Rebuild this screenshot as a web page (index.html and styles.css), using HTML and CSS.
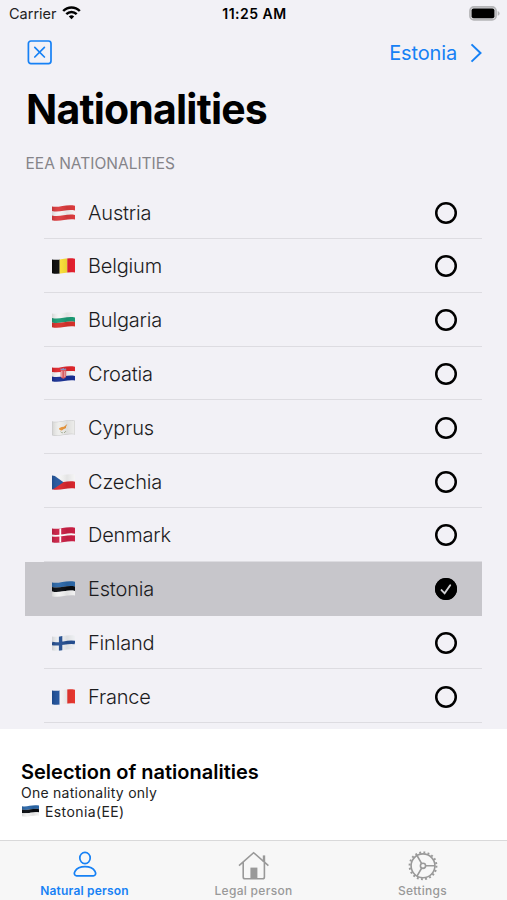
FILE: index.html
```html
<!DOCTYPE html>
<html lang="en">
<head>
	<meta charset="UTF-8">
	<title>Nationalities</title>
	<link rel="stylesheet" href="styles.css">
</head>
<body>
	<svg class="defs" width="0" height="0">
		<defs>
			<clipPath id="wave">
				<path d="M0 1.5C7 3 14 -1.2 23 .7V14.5C15 13 8 17.3 0 15.2Z"/>
			</clipPath>
			<linearGradient id="shade">
				<stop offset="0" stop-color="#000" stop-opacity=".12"/>
				<stop offset=".3" stop-color="#fff" stop-opacity=".04"/>
				<stop offset=".65" stop-color="#000" stop-opacity=".07"/>
				<stop offset="1" stop-color="#000" stop-opacity="0"/>
			</linearGradient>
			<g id="estonia">
				<path fill="#2b67a8" d="M0 0h23v5.5C15 3.5 8 8 0 6Z"/>
				<path fill="#080b10" d="M0 6C8 8 15 3.5 23 5.5V10C15 8.2 8 12.5 0 10.6Z"/>
				<path fill="#f2f2f2" d="M0 10.6C8 12.5 15 8.2 23 10v6H0Z"/>
			</g>
		</defs>
	</svg>

	<header class="status">
		<div class="carrier">
			<span>Carrier</span>
			<svg width="19" height="14" viewBox="0 0 19 14" fill="none" stroke="#000" stroke-width="2.5">
				<path d="M1.2 5C5.9 .2 13.1 .2 17.8 5"/>
				<path d="M4.3 8.2C7.3 5.3 11.7 5.3 14.7 8.2"/>
				<path d="M6.8 10.4Q9.5 8.3 12.2 10.4L9.5 13.2Z" fill="#000" stroke="none"/>
			</svg>
		</div>
		<div class="clock">11:25 AM</div>
		<svg class="battery" width="31" height="15" viewBox="0 0 31 15">
			<rect x=".9" y=".9" width="26.2" height="13" rx="4" fill="#d5d4d8" stroke="#b5b5b8" stroke-width="1.6"/>
			<rect x="2.6" y="2.6" width="22.8" height="9.6" rx="2"/>
			<path d="M28.7 5Q30.6 5.7 30.6 7.4T28.7 9.8Z" fill="#b5b5b8"/>
		</svg>
	</header>

	<nav class="navbar">
		<svg width="25" height="25" viewBox="0 0 25 25" fill="none" stroke="#1681f5" stroke-width="1.7" stroke-linecap="round">
			<rect x="1.4" y="1" width="22.6" height="22.6" rx="2.5"/>
			<path d="M7.8 7.4L17.4 17M17.4 7.4L7.8 17"/>
		</svg>
		<div class="next">
			<span>Estonia</span>
			<svg width="12" height="20" viewBox="0 0 12 20" fill="none" stroke="#1681f5" stroke-width="2">
				<path d="M1.5 1.4L10.5 10L1.5 18.6"/>
			</svg>
		</div>
	</nav>

	<main>
		<h1>Nationalities</h1>
		<h2>EEA NATIONALITIES</h2>
		<ul class="list">
			<li>
				<svg class="flag" viewBox="0 0 23 16"><g clip-path="url(#wave)">
					<path fill="#dc3b3d" d="M0 0h23v16H0z"/>
					<path fill="#f6f4f4" d="M0 6C8 8 15 3.5 23 5.5V10C15 8.2 8 12.5 0 10.6Z"/>
					<path fill="url(#shade)" d="M0 0h23v16H0z"/>
				</g></svg>
				<span class="name">Austria</span><i class="radio"></i>
			</li>
			<li>
				<svg class="flag" viewBox="0 0 23 16"><g clip-path="url(#wave)">
					<path fill="#080808" d="M0 0h7.7v16H0z"/>
					<path fill="#fbdf35" d="M7.7 0h7.6v16H7.7z"/>
					<path fill="#e5212f" d="M15.3 0H23v16h-7.7z"/>
					<path fill="url(#shade)" d="M0 0h23v16H0z"/>
				</g></svg>
				<span class="name">Belgium</span><i class="radio"></i>
			</li>
			<li>
				<svg class="flag" viewBox="0 0 23 16"><g clip-path="url(#wave)">
					<path fill="#f4f4f4" d="M0 0h23v5.5C15 3.5 8 8 0 6Z"/>
					<path fill="#1b9b74" d="M0 6C8 8 15 3.5 23 5.5V10C15 8.2 8 12.5 0 10.6Z"/>
					<path fill="#d8322b" d="M0 10.6C8 12.5 15 8.2 23 10v6H0Z"/>
					<path fill="url(#shade)" d="M0 0h23v16H0z"/>
				</g></svg>
				<span class="name">Bulgaria</span><i class="radio"></i>
			</li>
			<li>
				<svg class="flag" viewBox="0 0 23 16"><g clip-path="url(#wave)">
					<path fill="#e0262c" d="M0 0h23v5.5C15 3.5 8 8 0 6Z"/>
					<path fill="#f6f6f6" d="M0 6C8 8 15 3.5 23 5.5V10C15 8.2 8 12.5 0 10.6Z"/>
					<path fill="#172f94" d="M0 10.6C8 12.5 15 8.2 23 10v6H0Z"/>
					<path fill="#dd5a60" d="M8.6 4h5.6v5.5q0 2.8-2.8 3.2-2.8-.4-2.8-3.2z"/>
					<path stroke="#f3c3c6" stroke-width=".9" d="M9.8 5v6M12.8 5v6"/>
					<path fill="#8a8fc0" d="M8.4 4l.3-1.8 1.2.8 1.4-1.2 1.4 1.2 1.3-.8.3 1.8z"/>
					<path fill="url(#shade)" d="M0 0h23v16H0z"/>
				</g></svg>
				<span class="name">Croatia</span><i class="radio"></i>
			</li>
			<li>
				<svg class="flag" viewBox="0 0 23 16"><g clip-path="url(#wave)">
					<path fill="#eeeeec" d="M0 0h23v16H0z"/>
					<path fill="#e9953a" d="M7 8.3l2.6-1.4 2.3-.2 3.4-2.6-1.4 3 .2 1-2.6 1.2-1.6 1.2-2.3-.4z"/>
					<path fill="none" stroke="#9aa488" stroke-width=".9" d="M8.6 11.7q1 1.2 2.2 1.1M13.8 11.2q-.7 1.3-1.7 1.5"/>
					<path fill="url(#shade)" d="M0 0h23v16H0z"/>
					<path fill="none" stroke="#c8c8c9" d="M0 1.5C7 3 14 -1.2 23 .7V14.5C15 13 8 17.3 0 15.2Z"/>
				</g></svg>
				<span class="name">Cyprus</span><i class="radio"></i>
			</li>
			<li>
				<svg class="flag" viewBox="0 0 23 16"><g clip-path="url(#wave)">
					<path fill="#f5f5f5" d="M0 0h23v16H0z"/>
					<path fill="#d9272e" d="M0 8.6C8 10.5 15 6 23 7.8V16H0Z"/>
					<path fill="#23569e" d="M0 0L11.5 8.3L0 16z"/>
					<path fill="url(#shade)" d="M0 0h23v16H0z"/>
				</g></svg>
				<span class="name">Czechia</span><i class="radio"></i>
			</li>
			<li>
				<svg class="flag" viewBox="0 0 23 16"><g clip-path="url(#wave)">
					<path fill="#cb2045" d="M0 0h23v16H0z"/>
					<path fill="none" stroke="#fff" stroke-width="1.8" d="M8.3 0v16M0 8.5C8 10.3 15 5.8 23 7.6"/>
					<path fill="url(#shade)" d="M0 0h23v16H0z"/>
				</g></svg>
				<span class="name">Denmark</span><i class="radio"></i>
			</li>
			<li class="selected">
				<svg class="flag" viewBox="0 0 23 16"><g clip-path="url(#wave)">
					<use href="#estonia"/>
					<path fill="url(#shade)" d="M0 0h23v16H0z"/>
				</g></svg>
				<span class="name">Estonia</span>
				<i class="radio"><svg width="22" height="22" viewBox="0 0 22 22" fill="none" stroke="#d2d2d5" stroke-width="1.9" stroke-linecap="round">
					<path d="M6.5 12.1L9.6 15.3L15.2 7.2"/>
				</svg></i>
			</li>
			<li>
				<svg class="flag" viewBox="0 0 23 16"><g clip-path="url(#wave)">
					<path fill="#eef0f3" d="M0 0h23v16H0z"/>
					<path fill="none" stroke="#254f91" stroke-width="3.4" d="M8.6 0v16M0 8.5C8 10.3 15 5.8 23 7.6"/>
					<path fill="url(#shade)" d="M0 0h23v16H0z"/>
				</g></svg>
				<span class="name">Finland</span><i class="radio"></i>
			</li>
			<li>
				<svg class="flag" viewBox="0 0 23 16"><g clip-path="url(#wave)">
					<path fill="#1e509b" d="M0 0h7.7v16H0z"/>
					<path fill="#f5f5f5" d="M7.7 0h7.6v16H7.7z"/>
					<path fill="#e8372f" d="M15.3 0H23v16h-7.7z"/>
					<path fill="url(#shade)" d="M0 0h23v16H0z"/>
				</g></svg>
				<span class="name">France</span><i class="radio"></i>
			</li>
		</ul>
	</main>

	<section class="summary">
		<h3>Selection of nationalities</h3>
		<p>One nationality only</p>
		<div class="choice">
			<svg class="flag-small" viewBox="0 0 23 16"><g clip-path="url(#wave)">
				<use href="#estonia"/>
				<path fill="url(#shade)" d="M0 0h23v16H0z"/>
			</g></svg>
			<span>Estonia(EE)</span>
		</div>
	</section>

	<footer class="tabs">
		<div class="tab active">
			<svg width="32" height="32" viewBox="0 0 32 32" fill="none" stroke="currentColor" stroke-width="1.7">
				<ellipse cx="16" cy="9" rx="5.2" ry="5.6"/>
				<path d="M7.6 26.8C3 26.8 5.3 17.6 16 17.6S29 26.8 24.4 26.8Z"/>
			</svg>
			<span>Natural person</span>
		</div>
		<div class="tab">
			<svg width="32" height="32" viewBox="0 0 32 32" fill="none" stroke="currentColor" stroke-width="1.6">
				<path d="M1 16.6L15.6 3.7L30.4 16.6M5.2 13.2V28Q5.2 29.8 7 29.8H24.6Q26.4 29.8 26.4 28V13"/>
				<path stroke-width="2.4" d="M26 6.4V13"/>
				<path fill="currentColor" stroke="none" d="M12.4 18.6h7V30h-7z"/>
			</svg>
			<span>Legal person</span>
		</div>
		<div class="tab">
			<svg width="32" height="32" viewBox="0 0 32 32" fill="none" stroke="currentColor" stroke-width="1.6">
				<circle cx="16" cy="16.8" r="11.9"/>
				<circle cx="16" cy="16.8" r="13.4" stroke-width="2" stroke-dasharray="1.9 2.31"/>
				<circle cx="16" cy="16.8" r="2.6"/>
				<path d="M18.6 16.8H27.9M14.7 14.6L10 6.5M14.7 19L10 27.1"/>
			</svg>
			<span>Settings</span>
		</div>
	</footer>
</body>
</html>
```

FILE: styles.css
```css
*{
	margin: 0;
	padding: 0;
	box-sizing: border-box;
}
body{
	width: 507px;
	height: 900px;
	overflow: hidden;
	display: flex;
	flex-direction: column;
	font-family: Inter, "Liberation Sans", sans-serif;
	background-color: #f2f1f6;
	color: #000;
}
span, h1, h2, h3, p{
	white-space: nowrap;
}
.defs{
	position: absolute;
}
.status{
	height: 28px;
	display: grid;
	grid-template-columns: 1fr auto 1fr;
	align-items: center;
	padding: 0 7px 2px 9px;
	font-size: 14.5px;
}
.carrier{
	display: flex;
	align-items: center;
	gap: 5px;
	color: #222;
}
.clock{
	font-size: 14px;
	font-weight: 600;
	letter-spacing: .5px;
}
.battery{
	justify-self: end;
}
.navbar{
	height: 49px;
	display: flex;
	align-items: center;
	justify-content: space-between;
	padding: 0 25px 0 27px;
}
.next{
	display: flex;
	align-items: center;
	gap: 13px;
	color: #1681f5;
	font-size: 20px;
	letter-spacing: -.15px;
}
main{
	height: 652px;
	padding: 0 25px;
}
h1{
	height: 65px;
	line-height: 64px;
	font-size: 41px;
	font-weight: 700;
	letter-spacing: -.8px;
	padding-left: 1px;
}
h2{
	height: 43.3px;
	line-height: 44px;
	font-size: 15.5px;
	font-weight: 400;
	color: #858489;
	padding-left: .5px;
}
.list{
	list-style-type: none;
}
.list li{
	height: 53.8px;
	display: flex;
	align-items: center;
	padding: 1px 26px 0 27px;
	background: linear-gradient(#dddce1, #dddce1) 19px 100% / 100% 1px no-repeat;
}
.list .selected{
	background: #c7c6cb;
}
.flag{
	width: 23px;
	height: 16px;
	margin-right: 13px;
}
.name{
	flex: 1;
	font-size: 20px;
	font-weight: 300;
	letter-spacing: -.18px;
	color: #1c1c1e;
}
.radio{
	width: 22px;
	height: 22px;
	margin-right: -.6px;
	box-shadow: inset 0 0 0 2.5px #000;
	border-radius: 50%;
}
.selected .radio{
	background-color: #000;
}
.radio svg{
	display: block;
}
.summary{
	height: 111px;
	padding: 30px 21px 0;
	background-color: #fff;
}
h3{
	height: 25px;
	line-height: 26px;
	font-size: 20px;
	font-weight: 600;
	letter-spacing: 0;
}
.summary p{
	height: 18px;
	line-height: 17px;
	font-size: 14px;
	letter-spacing: .25px;
	color: #222;
}
.choice{
	height: 20px;
	display: flex;
	align-items: center;
	gap: 6px;
	padding: 0 0 2px 1px;
	font-size: 14px;
	letter-spacing: .4px;
	color: #222;
}
.flag-small{
	width: 17px;
	height: 12px;
}
.tabs{
	height: 60px;
	display: grid;
	grid-template-columns: repeat(3, 1fr);
	background-color: #f7f7f7;
	border-top: 1px solid #d9d9da;
}
.tab{
	display: flex;
	flex-direction: column;
	align-items: center;
	padding-top: 8px;
	color: #999;
	font-size: 12px;
	font-weight: 500;
	letter-spacing: .3px;
}
.tab span{
	line-height: 20px;
}
.active{
	color: #1681f5;
}
.active span{
	font-weight: 600;
	letter-spacing: .2px;
}
```
